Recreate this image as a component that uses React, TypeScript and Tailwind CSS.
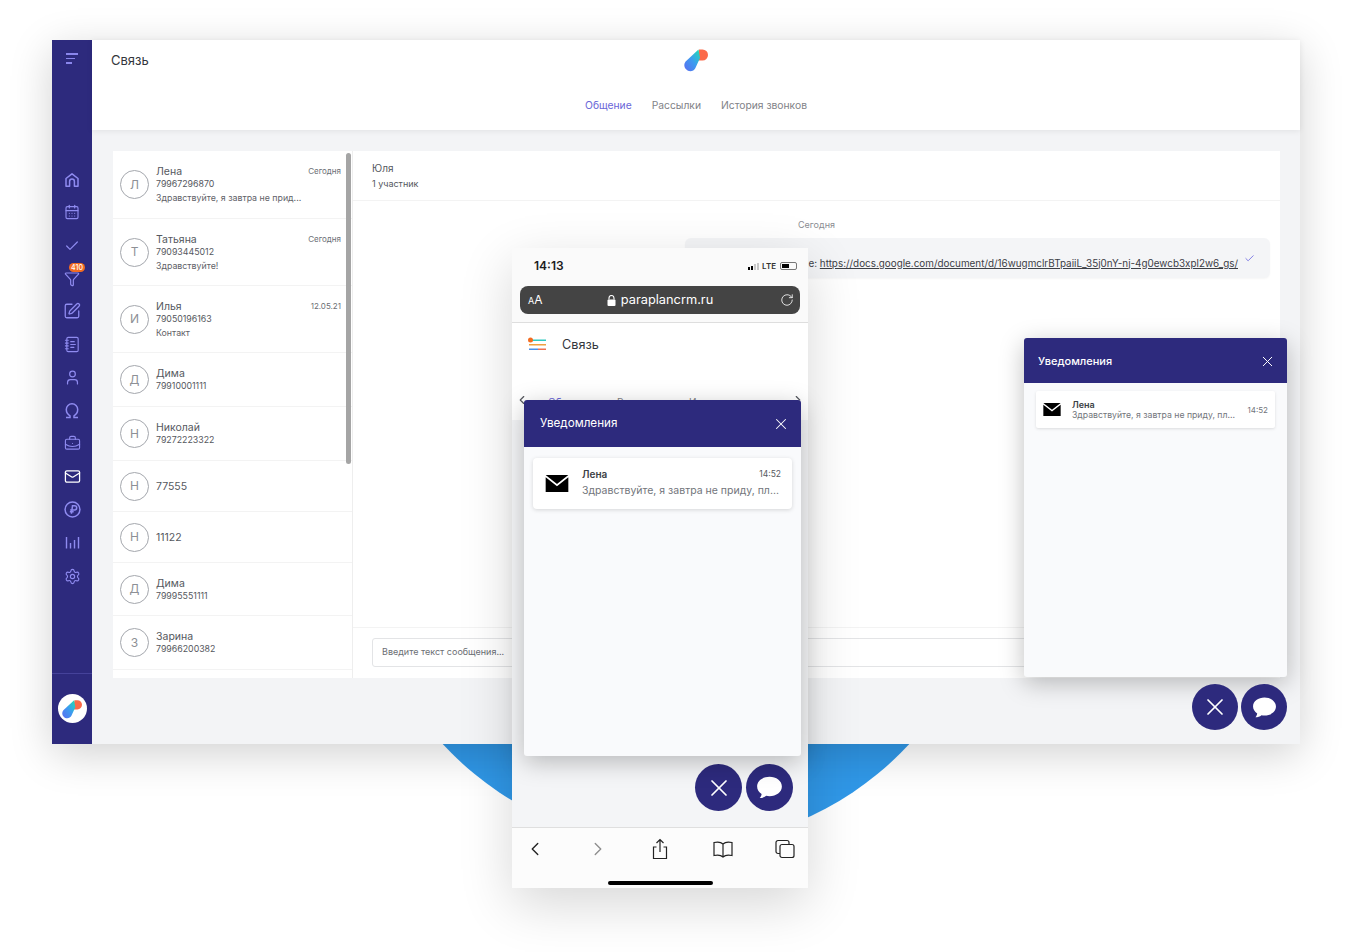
import {
  BriefcaseBusiness,
  CalendarDays,
  Check,
  ChevronLeft,
  ChevronRight,
  Filter,
  Mail,
  NotebookText,
  RotateCw,
  Settings,
  SquarePen,
  User,
  X,
} from "lucide-react";

const font = { fontFamily: "Inter, 'Noto Sans', sans-serif" };

const contacts = [
  { letter: "Л", name: "Лена", phone: "79967296870", text: "Здравствуйте, я завтра не прид...", date: "Сегодня", h: "h-[68px]" },
  { letter: "Т", name: "Татьяна", phone: "79093445012", text: "Здравствуйте!", date: "Сегодня", h: "h-[67px]" },
  { letter: "И", name: "Илья", phone: "79050196163", text: "Контакт", date: "12.05.21", h: "h-[67px]" },
  { letter: "Д", name: "Дима", phone: "79910001111", h: "h-[54px]" },
  { letter: "Н", name: "Николай", phone: "79272223322", h: "h-[54px]" },
  { letter: "Н", name: "77555", h: "h-[51px]" },
  { letter: "Н", name: "11122", h: "h-[51px]" },
  { letter: "Д", name: "Дима", phone: "79995551111", h: "h-[53px]" },
  { letter: "З", name: "Зарина", phone: "79966200382", h: "h-[54px]" },
];

function Logo({ className }: { className: string }) {
  return (
    <svg className={className} viewBox="0 0 24 24">
      <defs>
        <linearGradient id="drop" x1="0" y1="1" x2="1" y2="0">
          <stop offset="0" stopColor="#5b6cf0" />
          <stop offset="0.5" stopColor="#3d9bf0" />
          <stop offset="1" stopColor="#1fe0b0" />
        </linearGradient>
      </defs>
      <path d="M15 1.5h3.5a5.5 5.5 0 0 1 0 11H13z" fill="#fb6a4a" />
      <path d="M14.5 1.5 1.6 13.5a5.5 5.5 0 0 0-1.3 3.6c0 3.4 2.8 6.1 6 6.1 2.2 0 4-1.2 5-3L16 10z" fill="url(#drop)" />
    </svg>
  );
}

function Home() {
  return (
    <svg className="w-[16px] h-[16px]" viewBox="0 0 16 16" fill="none" stroke="currentColor" strokeWidth="1.5" strokeLinejoin="round">
      <path d="M2 6.5 8 1.8l6 4.7v7.700h-3.600V9.400a2.400 2.400 0 0 0-4.800 0v4.800H2z" />
    </svg>
  );
}

function Ruble() {
  return (
    <svg className="w-[17px] h-[17px]" viewBox="0 0 16 16" fill="none" stroke="currentColor" strokeWidth="1.400">
      <circle cx="8" cy="8" r="7" />
      <path d="M7 12 8 4.500h2a1.900 1.900 0 0 1 0 3.900H5.800M5.500 10.200h3.600" />
    </svg>
  );
}

function Omega() {
  return (
    <svg className="w-[16px] h-[17px]" viewBox="0 0 16 17" fill="none" stroke="currentColor" strokeWidth="1.500">
      <path d="M2 15.500h4v-1.700C3.500 12.300 2.300 10 2.300 7.500a5.700 5.700 0 0 1 11.400 0c0 2.500-1.200 4.800-3.700 6.300v1.700h4" />
    </svg>
  );
}

function Bars() {
  return (
    <svg className="w-[15px] h-[15px]" viewBox="0 0 15 15" fill="none" stroke="currentColor" strokeWidth="1.400">
      <path d="M1.500 2v11.500M5.500 8v5.500M9.500 5v8.500M13.500 2v11.500" />
    </svg>
  );
}

function Sidebar() {
  const top = "text-[#8f8bf0] h-[33px] flex items-center justify-center";
  return (
    <div className="w-10 shrink-0 bg-[#2d2a7d] flex flex-col items-stretch">
      <div className="h-[36px] flex flex-col items-start justify-center gap-[3px] pl-[14px] pt-[1px]">
        <div className="w-[12px] h-[1.5px] bg-[#8a86ec]" />
        <div className="w-[9px] h-[1.5px] bg-[#8a86ec]" />
        <div className="w-[6px] h-[1.5px] bg-[#8a86ec]" />
      </div>
      <div className="h-[87px]" />
      <div className={top}><Home /></div>
      <div className={top}><CalendarDays size={16} strokeWidth={1.7} className="-mt-[2px]" /></div>
      <div className={top}><Check size={16} strokeWidth={1.8} /></div>
      <div className={top + " relative"}>
        <Filter size={16} strokeWidth={1.8} />
        <span className="absolute left-[17px] top-[1px] h-[9px] w-[16px] rounded-full bg-[#f36c21] text-white text-[7px] leading-[9px] text-center font-medium">410</span>
      </div>
      <div className={top}><SquarePen size={18} strokeWidth={1.7} className="-mt-[1px]" /></div>
      <div className={top}><NotebookText size={17} strokeWidth={1.6} /></div>
      <div className={top}><User size={17} strokeWidth={1.7} /></div>
      <div className={top}><Omega /></div>
      <div className={top}><BriefcaseBusiness size={17} strokeWidth={1.6} /></div>
      <div className="text-white h-[33px] flex items-center justify-center"><Mail size={17} strokeWidth={1.8} /></div>
      <div className={top}><Ruble /></div>
      <div className={top}><Bars /></div>
      <div className={top}><Settings size={17} strokeWidth={1.6} className="mt-[2px]" /></div>
      <div className="flex-1" />
      <div className="h-[71px] border-t border-[#45429a] flex items-center justify-center">
        <div className="w-[29px] h-[29px] rounded-full bg-white flex items-center justify-center -mt-[1px]">
          <Logo className="w-[20px] h-[20px]" />
        </div>
      </div>
    </div>
  );
}

function ContactList() {
  return (
    <div className="relative w-[240px] shrink-0 h-full bg-white border-r border-[#eeeeee] overflow-hidden">
      {contacts.map((c, i) => (
        <div key={i} className={`${c.h} flex items-center pl-[7px] pr-[11px] border-b border-[#f3f3f3]`}>
          <div className="w-[29px] h-[29px] shrink-0 rounded-full border border-[#a4a7ad] flex items-center justify-center text-[12px] text-[#8d9096]">
            {c.letter}
          </div>
          <div className="ml-[7px] flex-1 min-w-0 relative pt-[1px]">
            <div className="text-[10.5px] leading-[12px] text-[#55585e]">{c.name}</div>
            {c.phone && <div className="text-[8.8px] leading-[12px] text-[#55585e]">{c.phone}</div>}
            {c.text && <div className="mt-[2px] text-[8.8px] leading-[12px] text-[#5f6268] truncate">{c.text}</div>}
            {c.date && <div className="absolute right-0 top-0 text-[8px] leading-[12px] text-[#6b6e74]">{c.date}</div>}
          </div>
        </div>
      ))}
      <div className="absolute right-[1px] top-[2px] w-[5px] h-[311px] rounded bg-[#a5a5a5]" />
    </div>
  );
}

function ChatPanel() {
  return (
    <div className="flex-1 h-full bg-white flex flex-col min-w-0">
      <div className="h-[50px] px-[19px] pt-[11px] border-b border-[#f3f3f3]">
        <div className="text-[10px] leading-[13px] text-[#55585e]">Юля</div>
        <div className="mt-[3px] text-[9px] leading-[12px] text-[#55585e]">1 участник</div>
      </div>
      <div className="flex-1 flex flex-col px-[10px]">
        <div className="mt-[18px] text-center text-[9px] leading-[12px] text-[#8b8d92]">Сегодня</div>
        <div className="mt-[7px] ml-[322px] h-[40px] rounded-md bg-[#f4f5f7] shadow-[0_1px_2px_rgba(0,0,0,0.04)] flex items-center justify-end pr-[15px] pt-[10px] text-[9.9px] text-[#3d4046]">
          <span>e:&nbsp;</span>
          <span className="underline whitespace-nowrap">https://docs.google.com/document/d/16wugmclrBTpaiiL_35j0nY-nj-4g0ewcb3xpl2w6_gs/</span>
          <Check size={11} strokeWidth={1.8} className="ml-[6px] -mt-[9px] text-[#6a66e0]" />
        </div>
      </div>
      <div className="h-[51px] border-t border-[#f3f3f3] px-[19px] pt-[10px]">
        <div className="h-[29px] border border-[#e3e4e6] rounded-[3px] px-[9px] pb-[2px] flex items-center text-[9px] text-[#6b6e74]">
          Введите текст сообщения...
        </div>
      </div>
    </div>
  );
}

function ChatBubbleIcon({ size }: { size: number }) {
  return (
    <svg width={size} height={size} viewBox="0 0 24 24" fill="white">
      <path d="M12 2.5c6 0 11 3.6 11 8.6s-5 8.6-11 8.6c-1 0-2-.1-2.900-.3-1.500 1.300-3.600 2-5.800 2 .9-1 1.500-2.200 1.700-3.700C2.500 16.100 1 13.800 1 11.100c0-5 5-8.600 11-8.600z" />
    </svg>
  );
}

function RoundButtons({ size, gap, x, icon }: { size: string; gap: string; x: number; icon: number }) {
  return (
    <div className={`flex ${gap}`}>
      <div className={`${size} rounded-full bg-[#2d2a7d] flex items-center justify-center text-white`}>
        <X size={x} strokeWidth={1.5} />
      </div>
      <div className={`${size} rounded-full bg-[#2d2a7d] flex items-center justify-center`}>
        <ChatBubbleIcon size={icon} />
      </div>
    </div>
  );
}

function Envelope({ className }: { className: string }) {
  return (
    <svg className={className} viewBox="0 0 24 18">
      <path d="M0 0h24L12 9.500z M0 2.300 12 11.800 24 2.300V18H0z" fill="#000" />
    </svg>
  );
}

function AppWindow() {
  return (
    <div className="absolute left-[52px] top-[40px] w-[1248px] h-[704px] flex bg-[#f3f4f6] shadow-[0_10px_40px_rgba(0,0,0,0.18)]">
      <Sidebar />
      <div className="flex-1 flex flex-col min-w-0">
        <div className="relative h-[90px] bg-white shadow-[0_1px_6px_rgba(0,0,0,0.08)] z-10">
          <div className="absolute left-[19px] top-[12px] text-[13px] leading-[16px] text-[#33363c]">Связь</div>
          <div className="flex justify-center pt-[8px]">
            <Logo className="w-[24px] h-[24px]" />
          </div>
          <div className="flex justify-center gap-[20px] mt-[26px] text-[10.3px] leading-[14px] text-[#7f8287]">
            <span className="text-[#6a66d8]">Общение</span>
            <span>Рассылки</span>
            <span>История звонков</span>
          </div>
        </div>
        <div className="flex h-[527px] mt-[21px] ml-[21px] mr-[20px]">
          <ContactList />
          <ChatPanel />
        </div>
      </div>
      <div className="absolute left-[972px] top-[298px] w-[263px] h-[339px] rounded-[3px] bg-[#f9fafc] shadow-[0_6px_24px_rgba(0,0,0,0.25)] overflow-hidden">
        <div className="h-[45px] bg-[#2d2a7d] flex items-center justify-between pl-[14px] pr-[11px] pt-[1px] text-white">
          <span className="text-[11px] font-medium">Уведомления</span>
          <X size={17} strokeWidth={1.4} />
        </div>
        <div className="mt-[8px] mx-[12px] h-[37px] rounded-[2px] bg-white shadow-[0_1px_3px_rgba(0,0,0,0.12)] flex items-center pl-[7px] pr-[7px]">
          <Envelope className="w-[18px] h-[13px] shrink-0" />
          <div className="ml-[11px] flex-1 min-w-0">
            <div className="text-[9px] leading-[10px] font-semibold text-[#3c3f45]">Лена</div>
            <div className="text-[8.7px] leading-[10px] text-[#72757b] whitespace-nowrap">Здравствуйте, я завтра не приду, пл...</div>
          </div>
          <span className="text-[8px] text-[#72757b] shrink-0 ml-[8px]">14:52</span>
        </div>
      </div>
      <div className="absolute left-[1140px] top-[644px]">
        <RoundButtons size="w-[46px] h-[46px]" gap="gap-[3px]" x={28} icon={25} />
      </div>
    </div>
  );
}

function Phone() {
  return (
    <div className="absolute left-[512px] top-[248px] w-[296px] h-[640px] flex flex-col bg-[#f4f5f7] shadow-[0_16px_50px_rgba(0,0,0,0.16)]">
      <div className="h-[75px] bg-[#fafafa] border-b border-[#dedede] shrink-0">
        <div className="h-[38px] flex items-center justify-between pl-[22px] pr-[11px] pb-[2px]">
          <span className="text-[12px] font-semibold text-[#1c1c1e]">14:13</span>
          <div className="flex items-center gap-[3px]">
            <div className="flex items-end gap-[1px] h-[7px]">
              <div className="w-[2px] h-[3px] bg-black" />
              <div className="w-[2px] h-[4px] bg-black" />
              <div className="w-[2px] h-[6px] bg-[#c8c8c8]" />
              <div className="w-[2px] h-[7px] bg-[#c8c8c8]" />
            </div>
            <span className="text-[8px] font-semibold text-[#333]">LTE</span>
            <div className="w-[17px] h-[8px] border border-[#777] rounded-[2px] p-[1px] ml-[1px]">
              <div className="w-[7px] h-full bg-black" />
            </div>
          </div>
        </div>
        <div className="mx-[8px] h-[28px] rounded-[8px] bg-[#444444] relative flex items-center justify-center text-white">
          <span className="absolute left-[8px] text-[12px] leading-none"><span className="text-[9px]">A</span>A</span>
          <svg width="9" height="11" viewBox="0 0 9 11" className="mr-[5px]">
            <path d="M2 4.500V3a2.500 2.500 0 0 1 5 0v1.500" fill="none" stroke="white" strokeWidth="1.100" />
            <rect x="0.500" y="4.500" width="8" height="6.500" rx="1" fill="white" />
          </svg>
          <span className="text-[12.8px] leading-[16px]">paraplancrm.ru</span>
          <RotateCw size={14} strokeWidth={1.4} className="absolute right-[6px]" />
        </div>
      </div>
      <div className="h-[97px] shrink-0 bg-white relative">
        <div className="flex items-center h-[44px] pl-[16px]">
          <svg width="18" height="16" viewBox="0 0 18 16">
            <rect x="3" y="2.500" width="15" height="1.500" fill="#30c9c0" />
            <rect x="1" y="7" width="17" height="1.500" fill="#f0a040" />
            <rect x="1" y="11.500" width="9" height="1.500" fill="#4a90e8" />
            <rect x="10" y="11.500" width="8" height="1.500" fill="#f07050" />
            <circle cx="2.500" cy="3" r="2.500" fill="#f36c21" />
          </svg>
          <span className="ml-[16px] text-[12.7px] text-[#33363c]">Связь</span>
        </div>
        <div className="absolute left-[3px] right-[3px] top-[70px] flex justify-between text-[#55585e]">
          <ChevronLeft size={14} />
          <ChevronRight size={14} />
        </div>
        <span className="absolute left-[36px] top-[73px] text-[10px] leading-[12px] text-[#6a66d8]">Об</span>
        <span className="absolute left-[105px] top-[73px] text-[10px] leading-[12px] text-[#7f8287]">Р</span>
        <span className="absolute left-[177px] top-[73px] text-[10px] leading-[12px] text-[#7f8287]">И</span>
      </div>
      <div className="flex-1" />
      <div className="flex justify-end px-[15px] pb-[16px]">
        <RoundButtons size="w-[47px] h-[47px]" gap="gap-[4px]" x={28} icon={27} />
      </div>
      <div className="h-[61px] shrink-0 bg-[#fcfcfc] border-t border-[#dfdfdf] relative">
        <div className="flex items-center justify-between pl-[12px] pr-[12px] pt-[10px] text-[#222]">
          <ChevronLeft size={22} strokeWidth={1.5} />
          <ChevronRight size={22} strokeWidth={1.5} className="text-[#8e8e8e]" />
          <svg width="22" height="22" viewBox="0 0 22 22" fill="none" stroke="currentColor" strokeWidth="1.200">
            <path d="M7.500 9H4.500v11.500h13V9h-3M11 14V1.500M7.500 5 11 1.500 14.500 5" />
          </svg>
          <svg width="22" height="22" viewBox="0 0 22 22" fill="none" stroke="currentColor" strokeWidth="1.200">
            <path d="M11 6C9 4 5 3.800 2 4.500v13c3-.7 7-.5 9 1.500 2-2 6-2.200 9-1.500v-13C17 3.800 13 4 11 6zv13" />
          </svg>
          <svg width="22" height="22" viewBox="0 0 22 22" fill="none" stroke="currentColor" strokeWidth="1.200">
            <rect x="6" y="6.500" width="14" height="13" rx="2" />
            <path d="M6 15.500H4a2 2 0 0 1-2-2V4.500a2 2 0 0 1 2-2h9a2 2 0 0 1 2 2v2" />
          </svg>
        </div>
        <div className="absolute left-[96px] bottom-[3px] w-[105px] h-[4px] rounded-full bg-black" />
      </div>
      <div className="absolute left-[12px] top-[152px] w-[277px] h-[356px] rounded-[3px] bg-[#f9fafc] shadow-[0_6px_24px_rgba(0,0,0,0.25)] overflow-hidden">
        <div className="h-[47px] bg-[#2d2a7d] flex items-center justify-between pl-[16px] pr-[11px] text-white">
          <span className="text-[11.7px] mt-[1px]">Уведомления</span>
          <X size={18} strokeWidth={1.4} />
        </div>
        <div className="mt-[11px] mx-[9px] h-[51px] rounded-[4px] bg-white shadow-[0_1px_4px_rgba(0,0,0,0.15)] flex items-center pl-[12px] pr-[11px]">
          <Envelope className="w-[24px] h-[17px] shrink-0" />
          <div className="ml-[13px] flex-1 min-w-0 -mt-[2px]">
            <div className="flex justify-between items-center">
              <span className="text-[10px] leading-[14px] font-semibold text-[#3c3f45]">Лена</span>
              <span className="text-[8.5px] text-[#55585e]">14:52</span>
            </div>
            <div className="mt-[3px] text-[10.5px] leading-[14px] text-[#72757b] whitespace-nowrap overflow-hidden">Здравствуйте, я завтра не приду, пл...</div>
          </div>
        </div>
      </div>
    </div>
  );
}

export default function App() {
  return (
    <div className="relative w-[1352px] h-[952px] bg-white overflow-hidden" style={font}>
      <div className="absolute left-[358px] top-[210px] w-[636px] h-[636px] rounded-full bg-[#3098e8]" />
      <AppWindow />
      <Phone />
    </div>
  );
}
